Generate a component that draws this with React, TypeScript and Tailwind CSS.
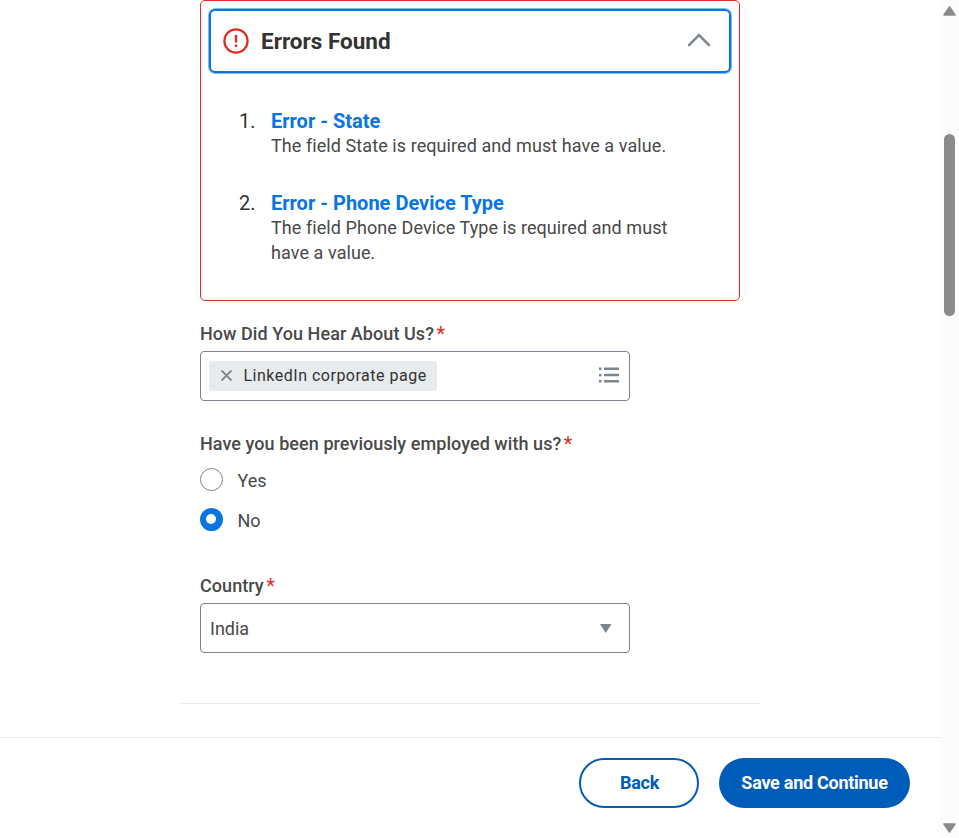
import React from 'react';

function Label({ children }: { children: React.ReactNode }) {
  return (
    <div className="h-6 text-[18px] font-medium leading-6 tracking-[.06px] whitespace-nowrap text-[#494949]">
      {children}
      <span className="ml-[2.5px] align-[-1px] text-[20px] leading-none font-normal text-[#de2e21]">*</span>
    </div>
  );
}

function ErrorItem({ n, title, className, children }: { n: string; title: string; className: string; children: React.ReactNode }) {
  return (
    <li className={'flex ' + className}>
      <span className="w-8 shrink-0 text-[20px] leading-[25px] text-[#333]">{n}</span>
      <div>
        <a className="block text-[20px] font-bold leading-[25px] text-[#0875e1]">{title}</a>
        <p className="-mt-px text-[18px] leading-[25px] tracking-[.075px] whitespace-nowrap text-[#494949]">{children}</p>
      </div>
    </li>
  );
}

function Errors() {
  return (
    <section className="h-[301px] w-[540px] rounded-[5px] border border-[#de2e21] p-2">
      <button className="flex h-[64px] w-[522px] items-center rounded-[6px] border-2 border-[#0875e1] pl-3 pr-[18px] ring-1 ring-[#0875e1]/50">
        <svg className="size-[26px]" viewBox="0 0 26 26" fill="none" stroke="#de2e21">
          <circle cx="13" cy="13" r="11.6" strokeWidth="2.2" />
          <path d="M13 7v7.5M13 16.500v2.400" strokeWidth="2.4" />
        </svg>
        <span className="mb-px ml-3 text-[22.5px] font-bold leading-7 text-[#333]">Errors Found</span>
        <svg className="mb-[2px] ml-auto h-4 w-6" viewBox="0 0 24 16" fill="none" stroke="#7b858f" strokeWidth="2.5" strokeLinecap="round">
          <path d="M2 13.200 12 3l10 10.200" />
        </svg>
      </button>
      <ol className="pl-[30px]">
        <ErrorItem n="1." title="Error - State" className="mt-[36px]">The field State is required and must have a value.</ErrorItem>
        <ErrorItem n="2." title="Error - Phone Device Type" className="mt-[33px]">The field Phone Device Type is required and must<br />have a value.</ErrorItem>
      </ol>
    </section>
  );
}

export default function App() {
  return (
    <div className="flex h-[838px] w-[959px] overflow-hidden bg-white font-[Roboto,sans-serif]">
      <div className="flex w-[940px] flex-col">
        <main className="h-[737px] pl-[200px]">
          <Errors />
          <div className="mt-[21px]"><Label>How Did You Hear About Us?</Label></div>
          <div className="mt-[5px] flex h-[50px] w-[430px] items-center justify-between rounded-[4px] border border-[#7b858f] pl-2 pr-[10px]">
            <div className="flex h-[30px] w-[228px] items-center rounded-[3px] bg-[#e8ebed] pl-3">
              <svg className="mb-px size-[11px]" viewBox="0 0 11 11" stroke="#7b858f" strokeWidth="1.9"><path d="m.5.5 10 10M10.500.5l-10 10" /></svg>
              <span className="ml-[11.5px] text-[16px] tracking-[.5px] whitespace-nowrap text-[#333]">LinkedIn corporate page</span>
            </div>
            <svg className="mb-[2px] h-4 w-5" viewBox="0 0 20 16" stroke="#7b858f" strokeWidth="2.400"><path d="M0 1.800h2.500M5 1.800h15M0 8h2.500M5 8h15M0 14.200h2.500M5 14.200h15" /></svg>
          </div>
          <div className="mt-[31px]"><Label>Have you been previously employed with us?</Label></div>
          <div className="mt-[11px] flex h-6 items-center gap-[14.5px] text-[18px] text-[#494949]">
            <span className="size-[23px] rounded-full border border-[#7b858f]" /><span className="mt-[2px]">Yes</span>
          </div>
          <div className="mt-4 flex h-6 items-center gap-[14.5px] text-[18px] text-[#494949]">
            <span className="flex size-[23px] items-center rounded-full bg-[#0875e1] pb-px pl-[6px]"><span className="size-[10px] rounded-full bg-white" /></span><span className="mt-[2px]">No</span>
          </div>
          <div className="mt-[43px]"><Label>Country</Label></div>
          <div className="mt-[5px] flex h-[50px] w-[430px] items-center justify-between rounded-[4px] border border-[#7b858f] pl-[9px] pr-[17.5px] text-[18px] text-[#494949]">
            India
            <svg className="h-[9px] w-[11.5px]" viewBox="0 0 12 9" preserveAspectRatio="none" fill="#7b858f"><path d="M0 0h12L6 9z" /></svg>
          </div>
          <hr className="mt-[50px] -ml-5 w-[580px] border-[#e9e9e9]" />
        </main>
        <footer className="flex h-[101px] items-start justify-end gap-5 border-t border-[#ededed] pt-5 pr-[30px] text-[18px] font-bold tracking-[-.27px]">
          <button className="h-[50px] w-[120px] rounded-full border-2 border-[#005cb9] pb-[2px] pl-px text-[#005cb9]">Back</button>
          <button className="h-[50px] w-[191px] rounded-full bg-[#005cb9] pb-[2px] text-white">Save and Continue</button>
        </footer>
      </div>
      <aside className="flex w-[19px] flex-col items-center bg-[#fcfcfc]">
        <svg className="mt-[6px] h-[10px] w-[13px]" viewBox="0 0 13 10" fill="#8b8b8b" stroke="#8b8b8b" strokeWidth="1.600" strokeLinejoin="round"><path d="M6.500 1 12 9H1z" /></svg>
        <div className="mt-[118px] h-[182px] w-[11px] rounded-full bg-[#8b8b8b]" />
        <svg className="mt-auto mb-[5px] h-[10px] w-[13px]" viewBox="0 0 13 10" fill="#8b8b8b" stroke="#8b8b8b" strokeWidth="1.600" strokeLinejoin="round"><path d="M1 1h11L6.500 9z" /></svg>
      </aside>
    </div>
  );
}
